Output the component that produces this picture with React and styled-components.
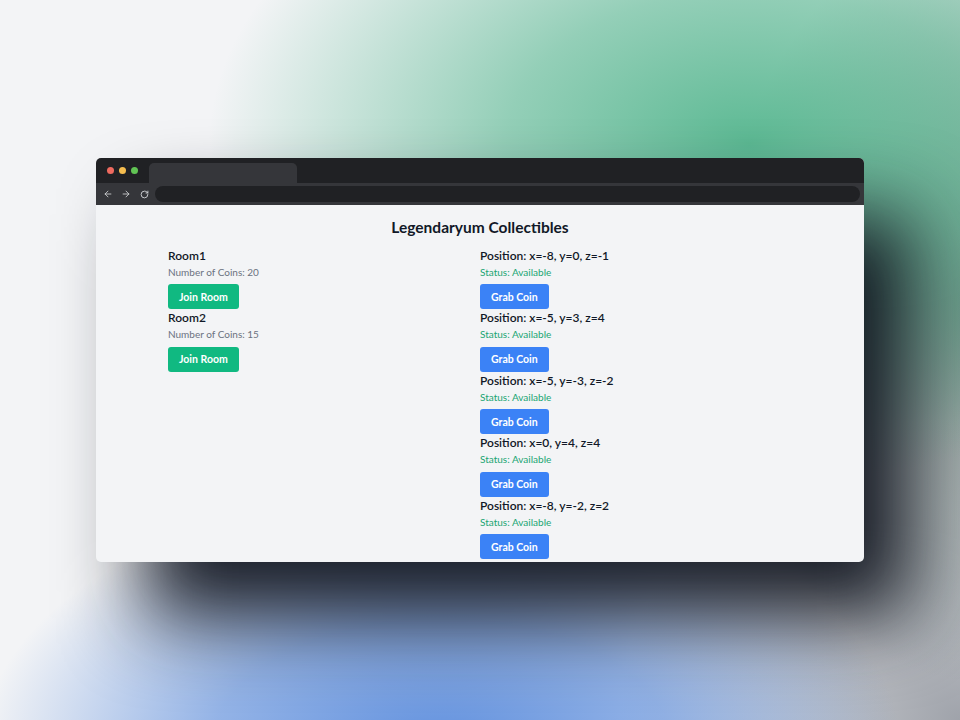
import styled, {createGlobalStyle} from 'styled-components'
import {ArrowLeft, ArrowRight, RotateCw} from 'lucide-react'

const GlobalStyle = createGlobalStyle`
  html, body {
    margin: 0;
    padding: 0;
  }
  body {
    font-family: "Lato", "Noto Sans", sans-serif;
  }
  * {
    box-sizing: border-box;
  }
`

const Scene = styled.div`
  width: 960px;
  height: 720px;
  display: flex;
  align-items: center;
  justify-content: center;
  overflow: hidden;
  background:
    radial-gradient(ellipse 540px 340px at 78% 20%, rgba(84, 182, 142, 0.95) 0%, rgba(84, 182, 142, 0.6) 45%, rgba(84, 182, 142, 0) 100%),
    radial-gradient(ellipse 260px 380px at 102% 42%, rgba(110, 130, 124, 0.9), rgba(110, 130, 124, 0) 100%),
    radial-gradient(ellipse 460px 260px at 46% 104%, rgba(96, 144, 222, 1) 0%, rgba(96, 144, 222, 0.65) 50%, rgba(96, 144, 222, 0) 100%),
    radial-gradient(ellipse 340px 300px at 100% 100%, rgba(150, 154, 162, 0.9), rgba(150, 154, 162, 0) 100%),
    #f3f4f6;
`

const BrowserWindow = styled.div`
  width: 768px;
  height: 404px;
  display: flex;
  flex-direction: column;
  border-radius: 5px;
  overflow: hidden;
  background: #f3f4f6;
  box-shadow: 48px 56px 80px 0 rgba(14, 18, 28, 0.95);
`

const TitleBar = styled.div`
  height: 25px;
  background: #202124;
  display: flex;
  align-items: flex-end;
  padding-left: 11px;
  gap: 11px;
`

const Lights = styled.div`
  display: flex;
  gap: 5px;
  align-self: center;
  margin-top: -1px;
`

const Light = styled.span`
  width: 7px;
  height: 7px;
  border-radius: 50%;
  background: ${(p) => p.color};
`

const Tab = styled.div`
  width: 148px;
  height: 20px;
  background: #35363a;
  border-radius: 5px 5px 0 0;
`

const Toolbar = styled.div`
  height: 22px;
  background: #35363a;
  display: flex;
  align-items: center;
  padding: 0 4px 0 7px;
  gap: 8px;
  color: #d4d6d9;
`

const NavButton = styled.span`
  display: flex;
  width: 10px;
  justify-content: center;
`

const AddressBar = styled.div`
  flex: 1;
  height: 16px;
  margin-left: -2px;
  border-radius: 8px;
  background: #202124;
`

const Viewport = styled.div`
  flex: 1;
  overflow: hidden;
  padding-top: 11px;
  color: #111827;
`

const Heading = styled.h1`
  margin: 0 0 8.5px;
  text-align: center;
  font-size: 15.5px;
  line-height: 22px;
  font-weight: 700;
`

const Columns = styled.div`
  width: 624px;
  margin: 0 auto;
  display: grid;
  grid-template-columns: 1fr 1fr;
`

const List = styled.div`
  display: flex;
  flex-direction: column;
`

const Item = styled.div`
  display: flex;
  flex-direction: column;
  align-items: flex-start;
`

const ItemTitle = styled.div`
  font-size: 12px;
  line-height: 17px;
  font-weight: 600;
`

const ItemMeta = styled.div`
  font-size: 10px;
  line-height: 16px;
  color: ${(p) => (p.$status ? '#20a572' : '#6b7280')};
`

const ActionButton = styled.button`
  margin-top: 4.5px;
  height: 25px;
  padding: 0 11px;
  border: none;
  border-radius: 3px;
  font-family: inherit;
  font-size: 10.5px;
  font-weight: 700;
  color: #fff;
  background: ${(p) => (p.$variant === 'join' ? '#10b981' : '#3b82f6')};
  cursor: pointer;
`

const rooms = [
  {name: 'Room1', coins: 20},
  {name: 'Room2', coins: 15},
]

const coins = [
  [-8, 0, -1],
  [-5, 3, 4],
  [-5, -3, -2],
  [0, 4, 4],
  [-8, -2, 2],
]

export default function App() {
  return (
    <>
      <GlobalStyle />
      <Scene>
        <BrowserWindow>
          <TitleBar>
            <Lights>
              <Light color="#ee6a5f" />
              <Light color="#f5bd4f" />
              <Light color="#61c454" />
            </Lights>
            <Tab />
          </TitleBar>
          <Toolbar>
            <NavButton>
              <ArrowLeft size={10} strokeWidth={2} />
            </NavButton>
            <NavButton>
              <ArrowRight size={10} strokeWidth={2} />
            </NavButton>
            <NavButton>
              <RotateCw size={9} strokeWidth={2.4} />
            </NavButton>
            <AddressBar />
          </Toolbar>
          <Viewport>
            <Heading>Legendaryum Collectibles</Heading>
            <Columns>
              <List>
                {rooms.map((room) => (
                  <Item key={room.name}>
                    <ItemTitle>{room.name}</ItemTitle>
                    <ItemMeta>Number of Coins: {room.coins}</ItemMeta>
                    <ActionButton $variant="join">Join Room</ActionButton>
                  </Item>
                ))}
              </List>
              <List>
                {coins.map(([x, y, z], i) => (
                  <Item key={i}>
                    <ItemTitle>
                      Position: x={x}, y={y}, z={z}
                    </ItemTitle>
                    <ItemMeta $status>Status: Available</ItemMeta>
                    <ActionButton $variant="grab">Grab Coin</ActionButton>
                  </Item>
                ))}
              </List>
            </Columns>
          </Viewport>
        </BrowserWindow>
      </Scene>
    </>
  )
}
